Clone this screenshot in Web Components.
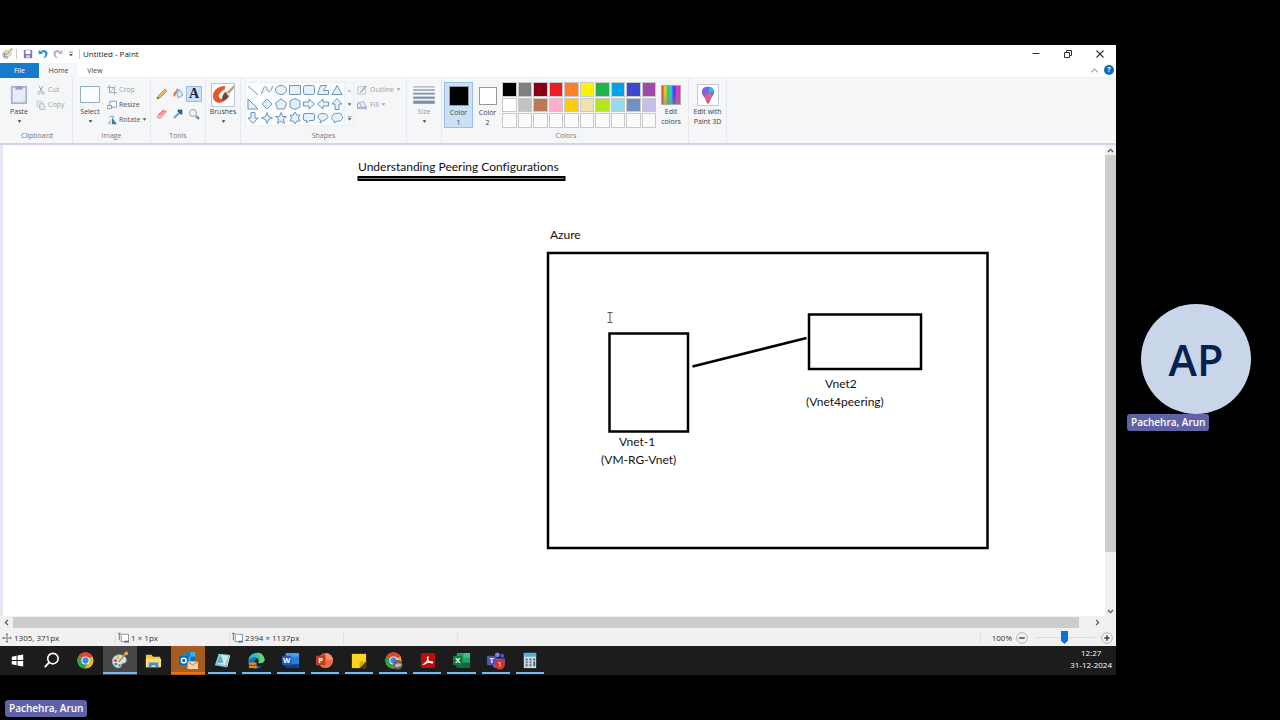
<!DOCTYPE html>
<html lang="en">
<head>
<meta charset="utf-8">
<title>Untitled - Paint</title>
<style>
  html, body { margin: 0; background: #000; }
  body { font-family: "Open Sans", "Noto Sans", sans-serif; font-size: 8px; line-height: 10px; color: #444; }
</style>
</head>
<body>
<meeting-stage></meeting-stage>
<script>
const ICONS = {
  palette: ['0 0 24 24', '<path d="M3 13c0-6 6-9 11-8 6 1 8 6 6 9-1 2-4 1-5 2-1 2 0 4-3 5-5 1-9-3-9-8z" fill="#d5e4ee" stroke="#8fa9ba"/><circle cx="7" cy="12" r="2" fill="#d94b3d"/><circle cx="10" cy="8.500" r="1.800" fill="#e9b431"/><circle cx="7.500" cy="16.500" r="1.800" fill="#4779c4"/><circle cx="12" cy="18" r="1.700" fill="#55a451"/><path d="M11 14L20 3" stroke="#c08b50" stroke-width="2"/><circle cx="20.500" cy="3" r="2.500" fill="#e5a256"/>'],
  save: ['0 0 16 16', '<path d="M2 2h12v12H2z" fill="#8173b8" stroke="#625598"/><path d="M4 2h8v6H4z" fill="#fff"/><path d="M5 10h6v4H5z" fill="#ddd8f0"/>'],
  undo: ['0 0 16 16', '<path d="M1 1v7h7L6 6c4-2 7 1 5 5l-3 4c8-1 10-11 3-13-2-1-5 0-7 2z" fill="#2795dc"/>'],
  redo: ['0 0 16 16', '<path d="M15 1v7H8l2-2C6 4 3 7 5 11l3 4C0 14-2 4 5 2c2-1 5 0 7 2z" fill="#adb4d2"/>'],
  customize: ['0 0 8 8', '<path d="M1.500 1.500h5" stroke="#555"/><path d="M1.500 4h5L4 7z" fill="#444"/>'],
  caret: ['0 0 8 8', '<path d="M1 2h6L4 6z" fill="currentColor"/>'],
  caretup: ['0 0 8 8', '<path d="M1 6h6L4 2z" fill="currentColor"/>'],
  carettiny: ['0 0 8 8', '<path d="M1 1h6" stroke="currentColor"/><path d="M1 3h6L4 7z" fill="currentColor"/>'],
  min: ['0 0 12 12', '<path d="M2.500 5.500h7" stroke="#333"/>'],
  max: ['0 0 12 12', '<path d="M2.500 4.500h5v5h-5zM4.500 4.500v-2h5v5h-2" fill="none" stroke="#333"/>'],
  close: ['0 0 12 12', '<path d="M2.500 2.500l7 7M9.500 2.500l-7 7" stroke="#333" stroke-width="1.100"/>'],
  up: ['0 0 12 12', '<path d="M2.500 8L6 4.500 9.500 8" fill="none" stroke="currentColor" stroke-width="1.600"/>'],
  down: ['0 0 12 12', '<path d="M2.500 4L6 7.500 9.500 4" fill="none" stroke="currentColor" stroke-width="1.600"/>'],
  left: ['0 0 12 12', '<path d="M8 2.500L4.500 6 8 9.500" fill="none" stroke="currentColor" stroke-width="1.600"/>'],
  right: ['0 0 12 12', '<path d="M4 2.500L7.500 6 4 9.500" fill="none" stroke="currentColor" stroke-width="1.600"/>'],
  paste: ['0 0 20 22', '<path d="M2 2h16v18H2z" fill="#e9edf9" stroke="#a9b3d6" stroke-width="2"/><path d="M6 1h8v4H6z" fill="#93a0c4"/><path d="M13 20l5-5" stroke="#c0c8e0"/>'],
  cut: ['0 0 12 12', '<path d="M3.500 1l4 7M8.500 1l-4 7" stroke="#a0a6b5" stroke-width="1.200"/><circle cx="3.500" cy="9.500" r="1.700" fill="none" stroke="#aab2c6"/><circle cx="8.500" cy="9.500" r="1.700" fill="none" stroke="#aab2c6"/>'],
  copy: ['0 0 12 12', '<path d="M1.500 1.500h5l1 1V8h-6z" fill="#eef1f8" stroke="#b7bdd0"/><path d="M4.500 4.500h4l2 2v5h-6z" fill="#e3e9f6" stroke="#aab3cd"/>'],
  select: ['0 0 20 18', '<path d="M.5.5h19v16H.5z" fill="#fbfdfe" stroke="#8fb0c3"/>'],
  crop: ['0 0 12 12', '<path d="M3 0v9h9M0 3h9v9" fill="none" stroke="#a9adb8" stroke-width="1.300"/><path d="M3 9l8-8" stroke="#a9adb8"/>'],
  resize: ['0 0 12 12', '<path d="M3.500 1.500h8v7h-8z" fill="#fff" stroke="#6d94b9"/><path d="M.5 6.500h5v4h-5z" fill="#e6f0f8" stroke="#6d94b9"/>'],
  rotate: ['0 0 12 12', '<path d="M6 11h6L6 3z" fill="#3c7ba8"/><path d="M5 11H0l5-7z" fill="#b3cddd"/><path d="M3 3c1-2 3-2 5-1l-1 2" fill="none" stroke="#4c91bd"/>'],
  pencil: ['0 0 12 12', '<path d="M1 11l1-3 7-7 2 2-7 7z" fill="#e4b763" stroke="#a98a57" stroke-width=".7"/><path d="M1 11l.8-2.200L3 10z" fill="#444"/>'],
  fillcan: ['0 0 12 12', '<path d="M4 3l4-1 3 5-5 3z" fill="#dce8f0" stroke="#7892a8" stroke-width=".8"/><path d="M6 5C3 0 6 0 7 3" fill="none" stroke="#7892a8"/><path d="M4 3C1 4 1 7 2 9c2-1 2-3 2-6z" fill="#e2725c"/>'],
  eraser: ['0 0 12 12', '<path d="M1 8l6-6 4 2-6 6H2z" fill="#ef9a9b" stroke="#d97577" stroke-width=".8"/><path d="M1 8l4 1 6-5" fill="none" stroke="#fff" stroke-width=".7"/>'],
  picker: ['0 0 12 12', '<path d="M2 10l5-5" stroke="#71a2c4" stroke-width="2"/><path d="M6 2l4 4M7 5l3-3" stroke="#2a6291" stroke-width="2.500"/>'],
  zoom: ['0 0 12 12', '<circle cx="5" cy="5" r="3.500" fill="#eef5fb" stroke="#98a5b1"/><path d="M8 8l3 3" stroke="#7d7674" stroke-width="2"/>'],
  brush: ['0 0 24 24', '<path d="M.5.5h23v23H.5z" fill="#fbfdff" stroke="#b7c7d6"/><path d="M14 3C6 3 1 9 2 15c2 7 11 6 15-1-3 1-7 4-9 0-1-3 2-5 6-8z" fill="#e0592b"/><path d="M23 2l-8 8 2 2 6-7z" fill="#c69c6c"/><path d="M15 9c-3 1-4 5-4 8 4 0 7-2 7-5z" fill="#6b4b36"/><path d="M16 10l3 3" stroke="#ddd" stroke-width="2"/>'],
  outline: ['0 0 14 12', '<path d="M2 2h9v9H2z" fill="#f4f5f8" stroke="#b7bac4"/><path d="M5 9l7-8" stroke="#a9acb6" stroke-width="1.800"/>'],
  fill: ['0 0 14 12', '<path d="M1 8h12v3H1z" fill="#a9b8e0"/><path d="M4 3l5-1 3 6-6 1z" fill="#e8ebf3" stroke="#a6adc2"/><path d="M4 3C1 4 1 6 2 8" fill="none" stroke="#99a5c9" stroke-width="1.500"/>'],
  lines: ['0 0 24 20', '<path d="M0 1h24" stroke="#8694ad" stroke-width="1"/><path d="M0 4.500h24" stroke="#8694ad" stroke-width="1.500"/><path d="M0 8.500h24" stroke="#8190ab" stroke-width="2"/><path d="M0 13h24" stroke="#8190ab" stroke-width="2.500"/><path d="M0 18h24" stroke="#7f8dab" stroke-width="3.500"/>'],
  paint3d: ['0 0 22 22', '<path d="M.5.5h21v21H.5z" fill="#fbfdfe" stroke="#c3cbd2"/><path d="M5 8c0-7 12-7 12 0 0 4-3 5-4 9h-4c0-4-4-5-4-9z" fill="#4b7be0"/><path d="M5 8c0-4 3-5 5-5l1 6-4 4C6 11 5 10 5 8z" fill="#8b62dd"/><path d="M12 3c3 0 5 2 5 5l-5 1z" fill="#38b6e6"/><path d="M7 13l4-4 5 2c-2 2-3 3-3 6H9c0-2-1-3-2-4z" fill="#e7559a"/><path d="M11 9l5 2-3 3z" fill="#ee733b"/><path d="M9 17h4l-2 3z" fill="#d2473f"/>'],
  move: ['0 0 12 12', '<path d="M6 1v10M1 6h10" stroke="#66758d"/><path d="M6 0l1.500 2.500h-3zM6 12l1.500-2.500h-3zM0 6l2.500 1.500v-3zM12 6L9.500 7.500v-3z" fill="#66758d"/>'],
  selsize: ['0 0 12 12', '<path d="M3.500 2.500h8v8h-8z" fill="#fff" stroke="#7f8ea6"/><path d="M1.500 9V1M0 1.500h3" fill="none" stroke="#5f7192"/><path d="M7 10.500h5" stroke="#5f7192" stroke-width="2"/>'],
  minus: ['0 0 12 12', '<circle cx="6" cy="6" r="5.300" fill="#f2f2f2" stroke="#b5b5b5"/><path d="M3.300 6h5.400" stroke="#444" stroke-width="1.500"/>'],
  plus: ['0 0 12 12', '<circle cx="6" cy="6" r="5.300" fill="#f2f2f2" stroke="#b5b5b5"/><path d="M3.300 6h5.400M6 3.300v5.400" stroke="#444" stroke-width="1.500"/>'],
  /* gallery shapes */
  s0: ['0 0 14 14', '<path d="M2 3l10 9"/>'],
  s1: ['0 0 14 14', '<path d="M1.500 11C4 2 6 2 7 6s4 4 5.500-3"/>'],
  s2: ['0 0 14 14', '<ellipse cx="7" cy="7" rx="5.500" ry="4.500"/>'],
  s3: ['0 0 14 14', '<path d="M1.500 2.500h11v9h-11z"/>'],
  s4: ['0 0 14 14', '<rect x="1.500" y="2.500" width="11" height="9" rx="2"/>'],
  s5: ['0 0 14 14', '<path d="M1.500 11.500l3-9h6l-3 5h5v4z"/>'],
  s6: ['0 0 14 14', '<path d="M7 2.500l5 9H2z"/>'],
  s7: ['0 0 14 14', '<path d="M2 2v10h10z"/>'],
  s8: ['0 0 14 14', '<path d="M7 2l5 5-5 5-5-5z"/>'],
  s9: ['0 0 14 14', '<path d="M7 2l5.500 4-2 6h-7l-2-6z"/>'],
  s10: ['0 0 14 14', '<path d="M7 1.500l5 2.500v6l-5 2.500L2 10V4z"/>'],
  s11: ['0 0 14 14', '<path d="M1.500 5H7V2l5.500 5L7 12V9H1.500z"/>'],
  s12: ['0 0 14 14', '<path d="M12.500 5H7V2L1.500 7 7 12V9h5.500z"/>'],
  s13: ['0 0 14 14', '<path d="M5 12.500V7H2l5-5.500L12 7H9v5.500z"/>'],
  s14: ['0 0 14 14', '<path d="M5 1.500V7H2l5 5.500L12 7H9V1.500z"/>'],
  s15: ['0 0 14 14', '<path d="M7 1.500L8.500 5.500 12.500 7 8.500 8.500 7 12.500 5.500 8.500 1.500 7l4-1.500z"/>'],
  s16: ['0 0 14 14', '<path d="M7 1.500l1.500 4h4L9.300 8l1.200 4.500L7 10l-3.500 2.500L4.700 8 1.500 5.500h4z"/>'],
  s17: ['0 0 14 14', '<path d="M7 1l1.700 3H12l-1.600 3L12 10H8.700L7 13l-1.700-3H2l1.600-3L2 4h3.300z"/>'],
  s18: ['0 0 14 14', '<path d="M3 2.500h8q1.500 0 1.500 1.500v4q0 1.500-1.500 1.500H7L4.500 12V9.500H3Q1.500 9.500 1.500 8V4q0-1.500 1.500-1.500z"/>'],
  s19: ['0 0 14 14', '<path d="M4 12l.5-3C0 7 1.500 2.500 7 2.500s7.500 5 0 7.200z"/>'],
  s20: ['0 0 14 14', '<path d="M4 12l.5-2C1 9 1 6 2.500 5 2.500 3 5 2 7 2.500c2-1 4.500 0 4.500 2 2 1.500 1 4-.5 4.500-1 1.500-3 1.500-4 1z"/>'],
  /* taskbar */
  start: ['0 0 20 20', '<path d="M4 6l5-1v4.500H4zM10 4.800l6-1v5.700h-6zM4 10.500h5V15l-5-1zM10 10.500h6v5.700l-6-1z" fill="#fff"/>'],
  search: ['0 0 20 20', '<circle cx="11.500" cy="8" r="5.500" fill="none" stroke="#fff" stroke-width="1.700"/><path d="M7.500 12L3 17" stroke="#fff" stroke-width="2"/>'],
  chrome: ['0 0 20 20', '<circle cx="10" cy="10" r="8.500" fill="#e3bb2c"/><path d="M10 10L2.600 5.800a8.500 8.500 0 0 1 14.800 0z" fill="#e04435"/><path d="M10 10l-7.400-4.200A8.500 8.500 0 0 0 9 18.500l4.500-7z" fill="#2fa050"/><path d="M2.600 5.800A8.500 8.500 0 0 1 17.400 5.800H10z" fill="#e04435"/><circle cx="10" cy="10" r="4.300" fill="#fff"/><circle cx="10" cy="10" r="3.300" fill="#4283e6"/>'],
  explorer: ['0 0 20 20', '<path d="M2 4h6l1.500 2H17v11H2z" fill="#f2c34b"/><path d="M2 8h16v9H2z" fill="#fadb7c"/><path d="M5 17v-5h10v5h-3v-2H8v2z" fill="#3c92d4"/>'],
  outlook: ['0 0 20 20', '<path d="M6 1h11v14H6z" fill="#44aee8"/><path d="M6 1h6v5H6z" fill="#1380cc"/><path d="M12 6h5v5h-5z" fill="#1a6cb5"/><rect y="5" width="10" height="10" rx="1" fill="#0d6bbd"/><circle cx="5" cy="10" r="2.500" fill="none" stroke="#fff" stroke-width="1.500"/><path d="M9 11h11v8H9z" fill="#f6d5ab"/><path d="M9 11l5.500 4 5.500-4" fill="none" stroke="#b87a3d"/>'],
  notepad: ['0 0 20 20', '<path d="M6 3l11 1-3 13-12-2z" fill="#8ec8d8"/><path d="M8 4l8 1-3 10-9-2z" fill="#c5e8ef"/><path d="M17 4l1 1-3 12-1 0z" fill="#e9eef0"/><path d="M8 4l3 8-7 1z" fill="#65adbd"/>'],
  edge: ['0 0 20 20', '<path d="M1.500 10C2 0 17-1 18.500 9c0 4-5 5-7 3 2-3-1-6-4-5-3 0-5 2-6 3z" fill="#36c1b2"/><path d="M1.500 10c1-4 8-5 9-1-2-1-3 1-2 4 1 4 6 4 8 2-6 7-16 3-15-5z" fill="#1677ce"/><path d="M10 2c5-1 8 3 8.500 7 0 3-4 4-6 3 3-3 1-8-2.500-10z" fill="#67d568"/><path d="M2 12h8v6H2z" fill="#d98a20"/><path d="M4 12v-1h4v1M2 15h8" stroke="#7a4c10" fill="none"/>'],
  sticky: ['0 0 20 20', '<path d="M3 3h15v15H3z" fill="#fbd51c"/><path d="M18 11v7h-7z" fill="#48412a"/><path d="M11 18v-7h7z" fill="#d9a80f"/>'],
  calc: ['0 0 20 20', '<path d="M4 2h13v16H4z" fill="#d3dade"/><path d="M4 2h13v4H4z" fill="#49b5df"/><path d="M6 8h2v2H6zM10 8h2v2h-2zM14 8h2v2h-2zM6 11h2v2H6zM10 11h2v2h-2zM6 14h2v2H6zM10 14h2v2h-2z" fill="#53646e"/><path d="M14 11h2v5h-2z" fill="#2d6d9d"/>'],
  acrobat: ['0 0 20 20', '<rect x="3" y="2" width="15" height="16" rx="2" fill="#b80f0c"/><path d="M6 14c3-2 5-5 4.500-8-1 0-1 3 1 5s4 2 4 1-5-1-9 2z" fill="none" stroke="#fff" stroke-width="1.200"/>']
};
const office = (shape, tile, letter) => ['0 0 20 20', shape + `<rect x="1" y="5" width="10" height="10" rx="1" fill="${tile}"/><text x="6" y="13" text-anchor="middle" font-size="8" font-weight="700" fill="#fff">${letter}</text>`];
ICONS.word = office('<rect x="5" y="2" width="14" height="16" rx="1" fill="#2b7cd3"/><path d="M5 3q0-1 1-1h12q1 0 1 1v3H5z" fill="#45a1e8"/><path d="M5 14h14v3q0 1-1 1H6q-1 0-1-1z" fill="#11408c"/>', '#1d5abd', 'W');
ICONS.ppt = office('<circle cx="11" cy="10" r="8" fill="#d35230"/><path d="M11 2a8 8 0 0 1 8 8h-8z" fill="#ff8f6b"/><path d="M3 10h16a8 8 0 0 1-16 0z" fill="#ed6c47"/>', '#c43e1c', 'P');
ICONS.excel = office('<rect x="5" y="2" width="14" height="16" rx="1" fill="#21a366"/><path d="M12 2h6q1 0 1 1v4h-7z" fill="#35c482"/><path d="M5 12h14v5q0 1-1 1H6q-1 0-1-1z" fill="#13683e"/>', '#107c41', 'X');
ICONS.teams = office('<circle cx="12" cy="4" r="2.500" fill="#7b83eb"/><circle cx="17" cy="5" r="2" fill="#5059c9"/><path d="M7 8h9v6q-1 4-5 4t-4-4z" fill="#6a72da"/><path d="M16 8h4v6q-1 2-4 2z" fill="#5059c9"/>', '#4b53bc', 'T');
ICONS.teams[1] += '<circle cx="14.500" cy="14" r="5.500" fill="#cf3434"/><text x="14.500" y="17" text-anchor="middle" font-size="8" fill="#fff">1</text>';
ICONS.chrome2 = ['0 0 20 20', ICONS.chrome[1] + '<circle cx="14.500" cy="14.500" r="5" fill="#71605d"/><path d="M11 16c1-4 6-4 8-1-2 0-3 2-5 2z" fill="#c9b4aa"/>'];

const define = (name, css, html, init) => {
  const template = document.createElement('template');
  template.innerHTML = `<style>*{box-sizing:border-box}button{font:inherit;color:inherit;background:none;border:0;padding:0;margin:0}${css}</style>${typeof html === 'string' ? html : ''}`;
  customElements.define(name, class extends HTMLElement {
    connectedCallback() {
      if (this.shadowRoot) return;
      const root = this.attachShadow({ mode: 'open' });
      root.append(template.content.cloneNode(true));
      if (typeof html === 'function') root.innerHTML += html(this);
      if (init) init(this, root);
    }
  });
};

/* <ui-icon name w h>: one glyph from the icon table */
define('ui-icon', `:host{display:inline-flex;flex:none} svg{display:block}`, el => {
  const [box, body] = ICONS[el.getAttribute('name')];
  const w = el.getAttribute('w') || 12, h = el.getAttribute('h') || w;
  return `<svg width="${w}" height="${h}" viewBox="${box}" aria-hidden="true">${body}</svg>`;
});

define('name-tag', `:host{display:inline-block;background:#6062a6;color:#fff;border-radius:3px;padding:0 4px;font-size:10px;font-weight:600;line-height:17px;white-space:nowrap}`, `<slot></slot>`);

define('participant-tile', `
  :host{display:flex;position:relative;align-items:center;justify-content:center;height:152px}
  .avatar{width:110px;height:110px;border-radius:50%;background:#c9d5e8;color:#06214f;display:flex;align-items:center;justify-content:center;font-size:43px;font-weight:600;line-height:1}
  name-tag{position:absolute;left:5px;bottom:4px}`,
  el => `<div class="avatar">${el.getAttribute('initials')}</div><name-tag><slot></slot></name-tag>`);

/* ribbon parts */
define('ribbon-group', `
  :host{display:flex;flex-direction:column;border-right:1px solid #e6e8eb;padding:4px 0 2px;flex:none}
  .body{display:flex;flex:1}
  .label{height:10px;text-align:center;color:#777}`,
  el => `<div class="body"><slot></slot></div><div class="label">${el.getAttribute('label') || ''}</div>`);

define('big-button', `
  :host{display:block;flex:none;width:34px}
  :host([disabled]){color:#9a9a9a}
  button{display:flex;flex-direction:column;align-items:center;width:100%;text-align:center}
  .art{height:25px;display:flex;align-items:center;justify-content:center}
  .caret{height:8px;display:flex;align-items:center;color:#444}`,
  el => `<button type="button" ${el.hasAttribute('disabled') ? 'disabled' : ''}><span class="art"><slot></slot></span><span>${el.getAttribute('label')}</span>${el.hasAttribute('menu') ? '<span class="caret"><ui-icon name="caret" w="5"></ui-icon></span>' : ''}</button>`);

define('small-button', `
  :host{display:block;color:#555}
  :host([disabled]){color:#a0a0a0}
  button{display:flex;align-items:center;gap:2px;height:15px;white-space:nowrap}`,
  el => `<button type="button" ${el.hasAttribute('disabled') ? 'disabled' : ''}><ui-icon name="${el.getAttribute('icon')}" w="${el.getAttribute('w') || 10}" h="10"></ui-icon><span>${el.getAttribute('label')}</span>${el.hasAttribute('menu') ? '<ui-icon name="caret" w="5"></ui-icon>' : ''}</button>`);

define('tool-grid', `
  :host{display:grid;grid-template-columns:repeat(3,16px);grid-auto-rows:16px;row-gap:4px;padding:4px 3px 0;align-content:start}
  button{display:flex;align-items:center;justify-content:center}
  button.on{background:#c9e0f7;outline:1px solid #98c0e6;outline-offset:-1px;font:700 14px/16px "Liberation Serif",serif;color:#223}`,
  `<button type="button" aria-label="Pencil"><ui-icon name="pencil"></ui-icon></button>
   <button type="button" aria-label="Fill with color"><ui-icon name="fillcan"></ui-icon></button>
   <button type="button" class="on" aria-label="Text">A</button>
   <button type="button" aria-label="Eraser"><ui-icon name="eraser"></ui-icon></button>
   <button type="button" aria-label="Color picker"><ui-icon name="picker"></ui-icon></button>
   <button type="button" aria-label="Magnifier"><ui-icon name="zoom"></ui-icon></button>`);

define('shape-gallery', `
  :host{display:flex;height:44px;margin-left:4px}
  .shapes{display:grid;grid-template-columns:repeat(7,14px);grid-auto-rows:14px;background:#fafdff;border:1px solid #eaf0f4;align-content:start}
  .shapes ui-icon{fill:#e6f2fb;stroke:#7096b3;stroke-width:1}
  .scroll{display:grid;grid-template-rows:repeat(3,1fr);width:9px;border:1px solid #eceef0;border-left:0;color:#666}
  .scroll button:first-child{color:#bbb}
  button{display:flex;align-items:center;justify-content:center}`,
  () => `<div class="shapes">${Array.from({ length: 21 }, (_, i) => `<button type="button" aria-label="Shape ${i + 1}"><ui-icon name="s${i}" w="14"></ui-icon></button>`).join('')}</div>
  <div class="scroll"><button type="button" aria-label="Scroll up"><ui-icon name="caretup" w="5"></ui-icon></button><button type="button" aria-label="Scroll down"><ui-icon name="caret" w="5"></ui-icon></button><button type="button" aria-label="More shapes"><ui-icon name="carettiny" w="5"></ui-icon></button></div>`);

define('color-slot', `
  :host{display:block;flex:none;width:29px;height:46px}
  :host([selected]){background:#c9e0f7;outline:1px solid #98c0e6;outline-offset:-1px}
  button{display:flex;flex-direction:column;align-items:center;width:100%;text-align:center;padding-top:1px}
  .well{height:25px;display:flex;align-items:center}
  i{display:block;border:1px solid #999}`,
  el => `<button type="button"><span class="well"><i style="background:${el.getAttribute('color')};width:${el.getAttribute('size')}px;height:${el.getAttribute('size')}px"></i></span><span>Color<br>${el.getAttribute('n')}</span></button>`);

const PALETTE = ['#000','#7f7f7f','#880015','#ed1c24','#ff7f27','#fff200','#22b14c','#00a2e8','#3f48cc','#a349a4',
  '#fff','#c3c3c3','#b97a57','#ffaec9','#ffc90e','#efe4b0','#b5e61d','#99d9ea','#7092be','#c8bfe7'];
define('color-palette', `
  :host{display:grid;grid-template-columns:repeat(10,1fr);grid-template-rows:repeat(3,1fr);gap:1px;width:154px;height:46px;flex:none}
  button{border:1px solid #c9c9c9}`,
  () => Array.from({ length: 30 }, (_, i) => `<button type="button" aria-label="Palette color ${i + 1}" style="background:${PALETTE[i] || '#f9fafb'}"></button>`).join(''));

define('spectrum-well', `:host{display:block;width:20px;height:20px;border:1px solid #aaa;background:linear-gradient(transparent 30%,#8888),linear-gradient(90deg,#d33,#ed3,#3c3,#3ce,#33e,#e3d,#e34)}`, ``);

define('paint-ribbon', `
  :host{display:flex;height:67px;background:#f5f6f7;font-size:7px;border-bottom:2px solid #cdd6e6;overflow:hidden}
  .col{display:flex;flex-direction:column}`,
  `<ribbon-group label="Clipboard" style="width:73px;padding-left:2px">
     <big-button label="Paste" menu><ui-icon name="paste" w="18" h="20"></ui-icon></big-button>
     <div class="col"><small-button icon="cut" label="Cut" disabled></small-button><small-button icon="copy" label="Copy" disabled></small-button></div>
   </ribbon-group>
   <ribbon-group label="Image" style="width:78px">
     <big-button label="Select" menu><ui-icon name="select" w="20" h="18"></ui-icon></big-button>
     <div class="col"><small-button icon="crop" label="Crop" disabled></small-button><small-button icon="resize" label="Resize"></small-button><small-button icon="rotate" label="Rotate" menu></small-button></div>
   </ribbon-group>
   <ribbon-group label="Tools" style="width:55px"><tool-grid></tool-grid></ribbon-group>
   <ribbon-group style="width:35px"><big-button label="Brushes" menu><ui-icon name="brush" w="24"></ui-icon></big-button></ribbon-group>
   <ribbon-group label="Shapes" style="width:166px">
     <shape-gallery></shape-gallery>
     <div class="col" style="padding-left:2px"><small-button icon="outline" w="12" label="Outline" menu disabled></small-button><small-button icon="fill" w="12" label="Fill" menu disabled></small-button></div>
   </ribbon-group>
   <ribbon-group style="width:35px"><big-button label="Size" menu disabled><ui-icon name="lines" w="22" h="18"></ui-icon></big-button></ribbon-group>
   <ribbon-group label="Colors" style="width:247px;padding-left:2px">
     <color-slot n="1" color="#000" size="20" selected></color-slot>
     <color-slot n="2" color="#fff" size="18"></color-slot>
     <color-palette></color-palette>
     <big-button label="Edit<br>colors" style="width:30px"><spectrum-well></spectrum-well></big-button>
   </ribbon-group>
   <ribbon-group style="width:38px"><big-button label="Edit with<br>Paint 3D" style="width:37px"><ui-icon name="paint3d" w="22"></ui-icon></big-button></ribbon-group>`);

define('title-bar', `
  :host{display:flex;align-items:center;height:18px;background:#fff;color:#222}
  button{display:flex;align-items:center;justify-content:center;height:18px}
  .quick button{width:15px}
  .quick{display:flex;align-items:center;padding-left:1px}
  hr{border:0;width:1px;height:10px;background:#ccc;margin:0 3px}
  h1{font:inherit;margin:0;flex:1}
  .win button{width:32px}
  .win{display:flex}`,
  `<div class="quick"><ui-icon name="palette"></ui-icon><hr><button type="button" aria-label="Save"><ui-icon name="save" w="10"></ui-icon></button><button type="button" aria-label="Undo"><ui-icon name="undo" w="10"></ui-icon></button><button type="button" aria-label="Redo"><ui-icon name="redo" w="10"></ui-icon></button><button type="button" style="width:11px" aria-label="Customize toolbar"><ui-icon name="customize" w="6"></ui-icon></button><hr></div>
   <h1>Untitled - Paint</h1>
   <div class="win"><button type="button" aria-label="Minimize"><ui-icon name="min"></ui-icon></button><button type="button" aria-label="Restore"><ui-icon name="max"></ui-icon></button><button type="button" aria-label="Close"><ui-icon name="close"></ui-icon></button></div>`);

define('tab-strip', `
  :host{display:flex;height:15px;background:#fff;font-size:7px;border-bottom:1px solid #eceef0}
  button{height:15px;width:39px}
  .file{background:#1979ca;color:#fff}
  .on{background:#f5f6f7}
  .end{margin-left:auto;display:flex;align-items:center;gap:4px;padding-right:2px;color:#b5b5b5}
  .end button{width:auto;height:auto;display:flex}
  .end .help{width:10px;height:10px;border-radius:50%;background:#0f6cc0;color:#fff;justify-content:center;font-weight:700;line-height:10px}`,
  `<button type="button" class="file">File</button><button type="button" class="on">Home</button><button type="button" style="width:34px">View</button>
   <div class="end"><button type="button" aria-label="Collapse ribbon"><ui-icon name="up" w="11"></ui-icon></button><button type="button" class="help" aria-label="Help">?</button></div>`);

define('scroll-rail', `
  :host{display:flex;background:#f0f0f0;color:#555;flex:none}
  :host([vertical]){flex-direction:column;width:11px}
  :host(:not([vertical])){height:13px}
  .track{flex:1;display:flex;flex-direction:inherit}
  i{background:#cdcdcd}
  :host([vertical]) i{height:88%}
  :host(:not([vertical])) i{flex:1;margin:1px 0}
  button{display:flex;align-items:center;justify-content:center}
  :host([vertical]) button{height:10px}
  :host(:not([vertical])) button{width:13px}
  :host(:not([vertical])) button:last-child{width:37px}`,
  el => { const v = el.hasAttribute('vertical');
    return `<button type="button" aria-label="Scroll back"><ui-icon name="${v ? 'up' : 'left'}" w="9"></ui-icon></button><div class="track"><i></i></div><button type="button" aria-label="Scroll forward"><ui-icon name="${v ? 'down' : 'right'}" w="9"></ui-icon></button>`; });

/* drawing surface: free placement of the drawn nodes */
define('paint-canvas', `
  :host{display:block;position:relative;flex:1;min-width:0;background:#fff;border-left:3px solid #e3e8f4;overflow:hidden;font:12px/18px Lato,"Open Sans",sans-serif;font-variant-ligatures:none;color:#111}
  svg{position:absolute;inset:0;width:100%;height:100%}
  p{position:absolute;margin:0;white-space:nowrap}`,
  `<svg aria-hidden="true"><g transform="translate(-3 -145)" fill="none" stroke="#000" stroke-width="2.500">
     <rect x="358.500" y="177" width="206" height="3" fill="#777" stroke-width="2"/>
     <rect x="548" y="253" width="439.500" height="295"/>
     <rect x="609.500" y="333.500" width="78.500" height="98"/>
     <rect x="809" y="314.500" width="112" height="54.500"/>
     <path d="M692.500 366.500L806.500 338"/>
     <path d="M607.500 312.500h5M610 312.500v10M607.500 322.500h5" stroke="#555" stroke-width="1"/>
   </g></svg>
   <p style="left:355px;top:13px">Understanding Peering Configurations</p>
   <p style="left:547px;top:81px">Azure</p>
   <p style="left:616px;top:288px">Vnet-1</p>
   <p style="left:598px;top:306px">(VM-RG-Vnet)</p>
   <p style="left:822px;top:230px">Vnet2</p>
   <p style="left:803px;top:248px">(Vnet4peering)</p>`);

define('status-bar', `
  :host{display:flex;align-items:center;height:17px;background:#f1f1f1;color:#333}
  .cell{display:flex;align-items:center;gap:2px;height:13px;border-right:1px solid #e2e2e2;padding-left:2px;width:114px;white-space:nowrap}
  .zoom{margin-left:auto;display:flex;align-items:center;gap:4px;padding:0 3px 0 11px;border-left:1px solid #e2e2e2;height:13px}
  button{display:flex}
  input{appearance:none;width:65px;height:13px;margin:0;background:linear-gradient(#dcdcdc,#dcdcdc) center/60px 1px no-repeat}
  input::-webkit-slider-thumb{appearance:none;width:7px;height:13px;background:#0a74d4;clip-path:polygon(0 0,100% 0,100% 75%,50% 100%,0 75%)}`,
  `<div class="cell" style="width:116px"><ui-icon name="move" w="10"></ui-icon><span>1305, 371px</span></div>
   <div class="cell"><ui-icon name="selsize" w="11"></ui-icon><span>1 × 1px</span></div>
   <div class="cell"><ui-icon name="selsize" w="11"></ui-icon><span>2394 × 1137px</span></div>
   <div class="cell"></div>
   <div class="zoom"><label for="zoom">100%</label><button type="button" aria-label="Zoom out"><ui-icon name="minus"></ui-icon></button><input id="zoom" type="range" min="0" max="100" value="50"><button type="button" aria-label="Zoom in"><ui-icon name="plus"></ui-icon></button></div>`);

define('task-button', `
  :host{display:block}
  button{display:flex;align-items:center;justify-content:center;width:100%;height:29px;padding-bottom:1px;position:relative}
  :host([active]){background:#474747}
  :host([alert]){background:#a95c1f}
  :host([open]) button::after{content:"";position:absolute;left:3px;right:3px;bottom:1px;height:2px;background:#76b9ed}
  :host([active]) button::after{left:0;right:0}
  :host([alert]) button::after{left:0;right:0;background:#f3720c}`,
  el => `<button type="button" aria-label="${el.getAttribute('icon')}"><ui-icon name="${el.getAttribute('icon')}" w="19"></ui-icon></button>`);

define('task-bar', `
  :host{display:flex;height:29px;background:#1c1c1c;color:#fff}
  .apps{display:grid;grid-template-columns:repeat(16,1fr);width:547px}
  time{margin-left:auto;padding:1px 4px 0 0;text-align:center;line-height:12px}`,
  () => `<div class="apps">${[['start'],['search'],['chrome'],['palette','open active'],['explorer'],['outlook','open alert'],['notepad','open'],['edge','open'],['word','open'],['ppt','open'],['sticky','open'],['chrome2','open'],['acrobat','open'],['excel','open'],['teams','open'],['calc','open']].map(([n, s]) => `<task-button icon="${n}" ${s || ''}></task-button>`).join('')}</div>
  <time datetime="2024-12-31T12:27">12:27<br>31-12-2024</time>`);

define('shared-desktop', `
  :host{display:flex;flex-direction:column;flex:1;min-width:0;background:#f0f0f0}
  .work{display:flex;flex:1;min-height:420px}`,
  `<title-bar></title-bar><tab-strip></tab-strip><paint-ribbon></paint-ribbon>
   <div class="work"><paint-canvas></paint-canvas><scroll-rail vertical></scroll-rail></div>
   <scroll-rail></scroll-rail><status-bar></status-bar><task-bar></task-bar>`);

define('meeting-stage', `
  :host{display:flex;flex-direction:column;min-height:100vh;background:#000;padding-top:45px;box-sizing:border-box}
  main{display:flex;flex:1}
  aside{width:164px;padding:0 10px 2px 6px;box-sizing:border-box;display:flex;flex-direction:column;justify-content:center}
  footer{height:45px;box-sizing:border-box;display:flex;align-items:flex-end;padding:0 5px 3px}`,
  `<main><shared-desktop></shared-desktop><aside><participant-tile initials="AP">Pachehra, Arun</participant-tile></aside></main>
   <footer><name-tag>Pachehra, Arun</name-tag></footer>`);
</script>
</body>
</html>
